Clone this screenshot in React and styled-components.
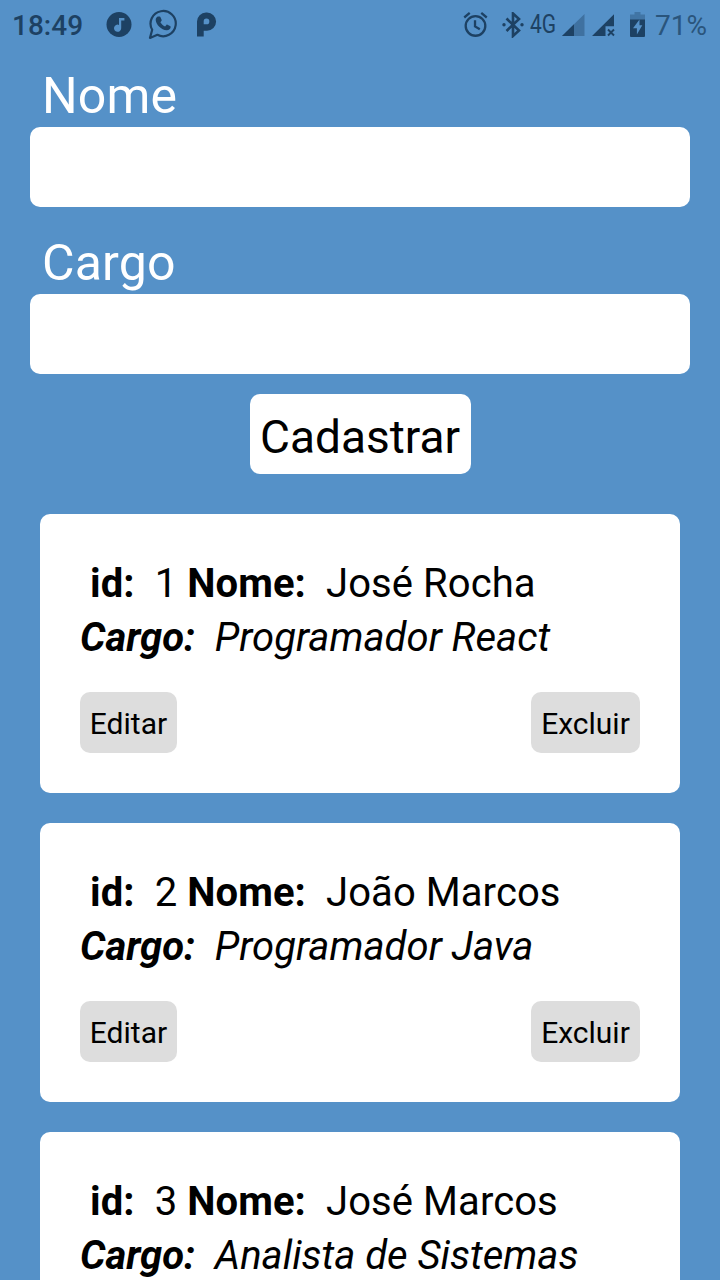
import React from "react";
import styled, { createGlobalStyle } from "styled-components";

const GlobalStyle = createGlobalStyle`
  *, *::before, *::after { box-sizing: border-box; }
  html, body { margin: 0; height: 1280px; overflow: hidden; background: #5591c8; }
  button, input { font-family: inherit; }
`;

const Screen = styled.div`
  width: 720px;
  height: 1280px;
  overflow: hidden;
  display: flex;
  flex-direction: column;
  background: #5591c8;
  color: #000;
  font-family: Roboto, "Liberation Sans", sans-serif;
`;

const StatusBar = styled.header`
  flex: none;
  height: 50px;
  padding: 0 13px 0 12px;
  display: flex;
  align-items: center;
  justify-content: space-between;
  color: #1d4163;
`;

const StatusGroup = styled.div`
  display: flex;
  align-items: center;
  height: 50px;
`;

const StatusText = styled.span`
  font-size: ${(p) => p.$size}px;
  font-weight: ${(p) => p.$weight || 400};
  color: ${(p) => p.$color || "inherit"};
  line-height: 32px;
  margin-left: ${(p) => p.$gap || 0}px;
  padding-top: 2px;
`;

const NetworkType = styled.span`
  width: 26px;
  margin-left: 6px;
  font-size: 25px;
  line-height: 32px;
  white-space: nowrap;
  transform: scaleX(0.84);
  transform-origin: left center;
`;

const StatusIcon = styled.svg`
  display: block;
  flex: none;
  margin-left: ${(p) => p.$gap}px;
  fill: currentColor;
`;

const Form = styled.form`
  flex: none;
  display: flex;
  flex-direction: column;
  align-items: center;
  padding: 17px 30px 0;
`;

const Field = styled.div`
  width: 100%;
  margin-bottom: ${(p) => p.$gap}px;
`;

const Label = styled.label`
  display: block;
  height: 60px;
  line-height: 59px;
  padding-left: 12px;
  font-size: 50px;
  letter-spacing: 0.15px;
  color: #fff;
`;

const Input = styled.input`
  display: block;
  width: 100%;
  height: 80px;
  padding: 0 10px;
  border: 0;
  border-radius: 10px;
  outline: none;
  background: #fff;
  font-size: 40px;
`;

const SubmitButton = styled.button`
  width: 221px;
  height: 80px;
  padding: 6px 0 0;
  border: 0;
  border-radius: 10px;
  background: #fff;
  color: #000;
  font-size: 46px;
  white-space: nowrap;
`;

const List = styled.main`
  display: flex;
  flex-direction: column;
  gap: 30px;
  padding: 40px 40px 0;
`;

const Card = styled.article`
  flex: none;
  height: 279px;
  padding: 43px 40px 40px;
  border-radius: 10px;
  background: #fff;
`;

const Line = styled.p`
  margin: 0;
  font-size: 40px;
  line-height: 54px;
  white-space: pre;
  font-style: ${(p) => (p.$italic ? "italic" : "normal")};
  letter-spacing: ${(p) => (p.$italic ? 0 : 0.08)}px;
`;

const Actions = styled.div`
  display: flex;
  justify-content: space-between;
  margin-top: 27px;
`;

const ActionButton = styled.button`
  width: ${(p) => p.$width}px;
  height: 61px;
  padding: 1px 0 0;
  border: 0;
  border-radius: 10px;
  background: #ddd;
  color: #000;
  font-size: 30px;
  white-space: nowrap;
`;

const employees = [
  { id: 1, nome: "José Rocha", cargo: "Programador React" },
  { id: 2, nome: "João Marcos", cargo: "Programador Java" },
  { id: 3, nome: "José Marcos", cargo: "Analista de Sistemas" },
];

function MusicIcon() {
  return (
    <StatusIcon $gap={23} width="26" height="26" viewBox="0 0 26 26">
      <circle cx="13" cy="12.5" r="12.5" />
      <path d="M13 6h5.400v2.600h-3.200v7.700a3.600 3.600 0 1 1-2.200-3.400z" fill="#5591c8" />
    </StatusIcon>
  );
}

function WhatsAppIcon() {
  return (
    <StatusIcon $gap={16} width="30" height="32" viewBox="0 0 30 32">
      <path
        d="M4.2 20.800A12.600 12.600 0 1 1 9.400 25.800L2 28.900z"
        fill="none"
        stroke="currentColor"
        strokeWidth="2.200"
        strokeLinejoin="round"
      />
      <path d="M10.300 7.500h1.300c.5 0 .7.2.9.7l1.100 2.600c.2.500.1.800-.2 1.200l-1 1.200c1.100 2 2.600 3.300 4.700 4.200l1.300-1.500c.3-.4.6-.4 1.100-.2l2.500 1.200c.5.3.7.500.7.900 0 2.300-2 3.600-4 3.500-5.400-.5-10.700-5.700-11-10.300 0-1.500 1-3.500 2.600-3.500z" />
    </StatusIcon>
  );
}

function ParkingIcon() {
  return (
    <StatusIcon $gap={18} width="21" height="26" viewBox="0 0 21 26">
      <path
        fillRule="evenodd"
        d="M1 9.500a9 9 0 0 1 9-9h1a9 9 0 0 1 0 18.200H7.700V24.500H1zM10.500 6.600a2.700 2.700 0 0 0-2.800 2.700v3h2.800a2.800 2.800 0 0 0 0-5.700z"
      />
    </StatusIcon>
  );
}

function AlarmIcon() {
  return (
    <StatusIcon $gap={0} width="25" height="28" viewBox="0 0 26 28">
      <g fill="none" stroke="currentColor" strokeWidth="2.400">
        <circle cx="13" cy="15" r="10.200" />
        <path d="M12.500 9v6.500l5 3M1.300 6.200 7 1.500M24.700 6.200 19 1.500" />
      </g>
    </StatusIcon>
  );
}

function BluetoothIcon() {
  return (
    <StatusIcon $gap={14} width="22" height="26" viewBox="0 0 22 26">
      <path
        d="M4.500 6.500l12.500 12-6 5.500V1.500l6 5.500L4.500 19"
        fill="none"
        stroke="currentColor"
        strokeWidth="2.600"
      />
      <circle cx="2" cy="12.700" r="1.700" />
      <circle cx="20" cy="12.700" r="1.700" />
    </StatusIcon>
  );
}

function SignalIcon() {
  return (
    <StatusIcon $gap={6} width="23" height="23" viewBox="0 0 23 23">
      <path d="M0 22 22.500 0v22z" opacity=".4" />
      <path d="M0 22 12 10.300V22z" />
    </StatusIcon>
  );
}

function NoSignalIcon() {
  return (
    <StatusIcon $gap={7} width="23" height="23" viewBox="0 0 23 23">
      <path d="M0 22 22 .2v12h-8.500V22z" />
      <path d="m16 15.500 6 6m0-6-6 6" stroke="currentColor" strokeWidth="1.900" />
    </StatusIcon>
  );
}

function BatteryIcon() {
  return (
    <StatusIcon $gap={15} width="15" height="26" viewBox="0 0 15 26">
      <path d="M4.500 0h6v2.500H15V8H0V2.500h4.500z" opacity=".35" />
      <path
        fillRule="evenodd"
        d="M0 7.500h15v16.500a1 1 0 0 1-1 1H1a1 1 0 0 1-1-1zM9.500 7.500 3 16.300h3.900V22.500L12.300 13.300H9.500z"
      />
    </StatusIcon>
  );
}

function EmployeeCard({ id, nome, cargo }) {
  return (
    <Card>
      <Line>
        <b>{" id: "}</b>
        {` ${id} `}
        <b>{"Nome: "}</b>
        {` ${nome}`}
      </Line>
      <Line $italic>
        <b>{"Cargo: "}</b>
        {` ${cargo}`}
      </Line>
      <Actions>
        <ActionButton type="button" $width={97}>Editar</ActionButton>
        <ActionButton type="button" $width={109}>Excluir</ActionButton>
      </Actions>
    </Card>
  );
}

export default function App() {
  return (
    <>
      <GlobalStyle />
      <Screen>
        <StatusBar>
          <StatusGroup>
            <StatusText $size={28} $weight={500}>18:49</StatusText>
            <MusicIcon />
            <WhatsAppIcon />
            <ParkingIcon />
          </StatusGroup>
          <StatusGroup>
            <AlarmIcon />
            <BluetoothIcon />
            <NetworkType>4G</NetworkType>
            <SignalIcon />
            <NoSignalIcon />
            <BatteryIcon />
            <StatusText $size={28} $gap={10} $color="#2a557c">71%</StatusText>
          </StatusGroup>
        </StatusBar>
        <Form onSubmit={(e) => e.preventDefault()}>
          <Field $gap={27}>
            <Label htmlFor="nome">Nome</Label>
            <Input id="nome" />
          </Field>
          <Field $gap={20}>
            <Label htmlFor="cargo">Cargo</Label>
            <Input id="cargo" />
          </Field>
          <SubmitButton type="submit">Cadastrar</SubmitButton>
        </Form>
        <List>
          {employees.map((employee) => (
            <EmployeeCard key={employee.id} {...employee} />
          ))}
        </List>
      </Screen>
    </>
  );
}
